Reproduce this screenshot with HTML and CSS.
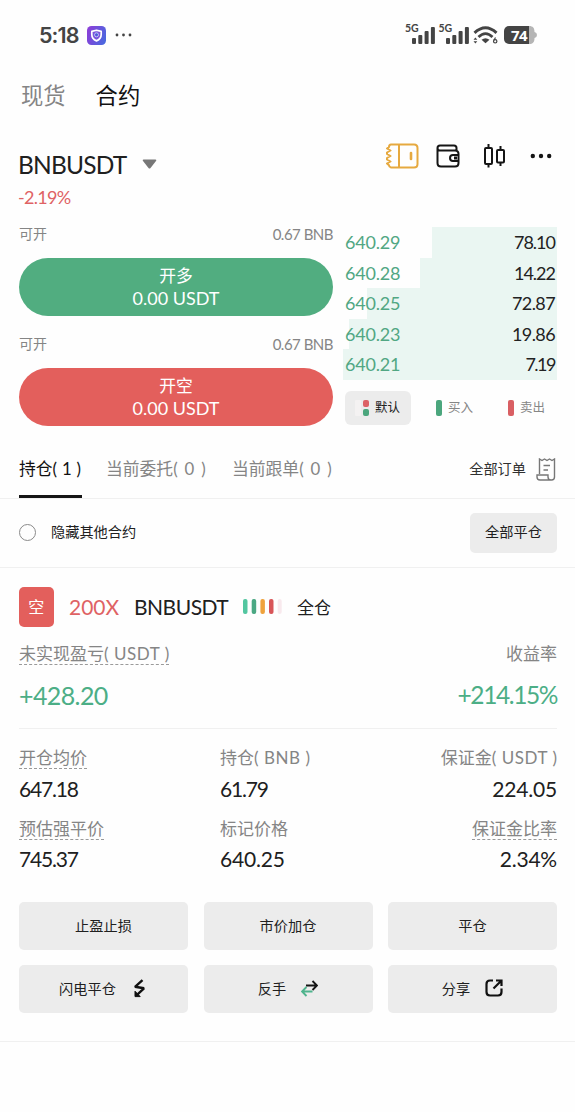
FILE: index.html
```html
<!DOCTYPE html>
<html lang="zh-CN">
<head>
<meta charset="utf-8">
<title>合约</title>
<link rel="stylesheet" href="styles.css">
</head>
<body>
<header class="status">
  <span class="time">5:18</span>
  <svg class="shield" width="19" height="19" viewBox="0 0 19 19"><defs><linearGradient id="g" x1="0" y1="0.3" x2="1" y2="0.7"><stop offset="0" stop-color="#8a3fd8"/><stop offset="1" stop-color="#4a68df"/></linearGradient></defs><rect width="19" height="19" rx="4.5" fill="url(#g)"/><path d="M9.5 4.2 14.2 5.4V8.5C14.2 11.500 12.300 13.700 9.500 14.900 6.700 13.700 4.800 11.500 4.800 8.500V5.400Z" fill="#7a55dc" stroke="#fff" stroke-width="1.7" stroke-linejoin="round"/><circle cx="9.500" cy="8.800" r="2" fill="#4c5cd8" stroke="#d9d2fa" stroke-width=".8"/></svg>
  <svg class="more-small" width="17" height="4" viewBox="0 0 17 4" fill="#444"><circle cx="2" cy="2" r="1.400"/><circle cx="8.500" cy="2" r="1.400"/><circle cx="15" cy="2" r="1.400"/></svg>
  <div class="signals">
    <div class="signal"><span class="net">5G</span><svg width="23" height="18" viewBox="0 0 23 18" fill="#444"><rect x="0" y="12" width="4" height="6" rx="1"/><rect x="6.300" y="9" width="4" height="9" rx="1"/><rect x="12.600" y="5" width="4" height="13" rx="1"/><rect x="18.900" y="1" width="4" height="17" rx="1"/></svg></div>
    <div class="signal"><span class="net">5G</span><svg width="23" height="18" viewBox="0 0 23 18" fill="#444"><rect x="0" y="12" width="4" height="6" rx="1"/><rect x="6.300" y="9" width="4" height="9" rx="1"/><rect x="12.600" y="5" width="4" height="13" rx="1"/><rect x="18.900" y="1" width="4" height="17" rx="1"/></svg></div>
    <svg class="wifi" width="26" height="19" viewBox="0 0 26 19" fill="none" stroke="#444"><path d="M1.500 6.800Q12.500-3.300 23.500 6.800" stroke-width="3"/><path d="M5.500 11Q12.500 4.300 19.500 11" stroke-width="2.800"/><path d="M8.500 13.800Q12.500 10.800 16.500 13.800L12.500 17.300Z" fill="#444" stroke="none"/><path d="M.500 13.800 2.400 11.500 4.300 13.800ZM.500 15.200 2.400 17.500 4.300 15.200Z" fill="#444" stroke="none"/><path d="M22.500 11.500 20.900 14.300" stroke-width="1.200"/><circle cx="22.200" cy="15.300" r="1.700" stroke-width="1.200"/></svg>
    <div class="battery"><span class="charge">74</span><svg width="8" height="18" viewBox="0 0 8 18" fill="#b5b5b5"><path d="M0 0C4 0 5.500 2 5.500 6Q8 6.500 8 9T5.500 12C5.500 16 4 18 0 18Z"/></svg></div>
  </div>
</header>

<nav class="modes"><span>现货</span><span class="current">合约</span></nav>

<section class="pair">
  <h1>BNBUSDT</h1>
  <svg class="caret" width="15" height="10" viewBox="0 0 15 10"><path d="M1.500.500H13.500Q15 .600 14 2L8.500 9Q7.500 10 6.500 9L1 2Q0 .600 1.500.500Z" fill="#777"/></svg>
  <div class="tools">
    <svg width="33" height="26" viewBox="0 0 33 26" fill="none" stroke="#e6a93f" stroke-width="2"><path d="M5 1.500H28Q31.500 1.500 31.500 5V21Q31.500 24.500 28 24.500H5Q3 24 3 22.200L1 20.500 4.500 18.500 1 16.500V15L4.500 13 1 11V9.500L4.500 7.500 1 5.500 3 4Q3 1.500 5 1.500Z" stroke-linejoin="round"/><path d="M13 2V24"/><path d="M25 10V16" stroke-width="2.600" stroke-linecap="round"/></svg>
    <svg width="24" height="24" viewBox="0 0 24 24" fill="none" stroke="#151515" stroke-width="2"><path d="M1.500 4V19Q1.500 22.500 5 22.500H19Q22.500 22.500 22.500 19V10Q22.500 6.500 19 6.500H4Q1.500 6.500 1.500 4 1.500 1.500 4 1.500H18Q20.500 1.500 20.500 4V6.500"/><path d="M22.500 11H17Q14 11 14 14T17 17H22.500"/><path d="M18 14H21" stroke-width="3"/></svg>
    <svg width="23" height="24" viewBox="0 0 23 24" fill="none" stroke="#151515" stroke-width="2"><path d="M5.500 0V4M5.500 20V23.500M17.500 2V6M17.500 18.500V22"/><rect x="2" y="4" width="7" height="16" rx="1"/><rect x="14" y="6" width="7" height="12.500" rx="1"/></svg>
    <svg width="22" height="6" viewBox="0 0 22 6" fill="#151515"><circle cx="2.800" cy="3" r="2.200"/><circle cx="11" cy="3" r="2.200"/><circle cx="19.200" cy="3" r="2.200"/></svg>
  </div>
</section>
<div class="change">-2.19%</div>

<section class="trade">
  <div class="orders">
    <div class="avail"><span class="zh">可开</span><span>0.67 BNB</span></div>
    <button class="open long"><span class="zh">开多</span><span>0.00 USDT</span></button>
    <div class="avail second"><span class="zh">可开</span><span>0.67 BNB</span></div>
    <button class="open short"><span class="zh">开空</span><span>0.00 USDT</span></button>
  </div>
  <div class="book">
    <div class="levels">
      <div class="level l1"><span>640.29</span><b>78.10</b></div>
      <div class="level l2"><span>640.28</span><b>14.22</b></div>
      <div class="level l3"><span>640.25</span><b>72.87</b></div>
      <div class="level l4"><span>640.23</span><b>19.86</b></div>
      <div class="level l5"><span>640.21</span><b class="narrow">7.19</b></div>
    </div>
    <div class="views">
      <div class="view active"><svg width="14" height="16" viewBox="0 0 14 16"><rect x="0" y="0" width="6" height="16" rx="1" fill="#f4f2f2"/><rect x="8" y="0" width="6" height="7" rx="2" fill="#dc6266"/><rect x="8" y="9" width="6" height="7" rx="2" fill="#4ba67d"/></svg>默认</div>
      <div class="view buy"><i></i>买入</div>
      <div class="view sell"><i></i>卖出</div>
    </div>
  </div>
</section>

<nav class="tabs">
  <span class="tab on">持仓<em>( 1 )</em></span><span class="tab">当前委托<em>( 0 )</em></span><span class="tab">当前跟单<em>( 0 )</em></span>
  <span class="history">全部订单<svg width="20" height="23" viewBox="0 0 20 23" fill="none" stroke="#777" stroke-width="1.400"><path d="M3.500 16V1L6 2.500 8.500 1 11 2.500 13.500 1 16 2.500 18.500 1V19Q18.500 22 15.500 22H4Q1 22 1 19V17H12V19Q12 22 15 22"/><path d="M7.500 7.500H14M7.500 12H12"/></svg></span>
</nav>

<section class="filter"><i class="radio"></i><span>隐藏其他合约</span><button class="closeall">全部平仓</button></section>

<main class="position">
  <div class="title">
    <span class="side">空</span><span class="lever">200X</span><span class="symbol">BNBUSDT</span>
    <svg class="risk" width="39" height="15" viewBox="0 0 39 15"><rect width="4.500" height="15" rx="2" fill="#53c6a0"/><rect x="8.700" width="4.500" height="15" rx="2" fill="#4ba883"/><rect x="17.400" width="4.500" height="15" rx="2" fill="#efa23c"/><rect x="26" width="4.500" height="15" rx="2" fill="#d85558"/><rect x="34.700" width="4" height="15" rx="2" fill="#f8e9ed"/></svg>
    <span class="margin-mode">全仓</span>
  </div>
  <div class="pnl">
    <div><span class="label tip">未实现盈亏<em>( USDT )</em></span><strong>+428.20</strong></div>
    <div class="end"><span class="label">收益率</span><strong class="rate">+214.15%</strong></div>
  </div>
  <div class="stats">
    <div><span class="label tip">开仓均价</span><strong class="narrow">647.18</strong></div>
    <div><span class="label">持仓<em>( BNB )</em></span><strong class="narrow">61.79</strong></div>
    <div class="end"><span class="label">保证金<em>( USDT )</em></span><strong>224.05</strong></div>
    <div><span class="label tip">预估强平价</span><strong class="narrow">745.37</strong></div>
    <div><span class="label">标记价格</span><strong>640.25</strong></div>
    <div class="end"><span class="label tip">保证金比率</span><strong>2.34%</strong></div>
  </div>
  <div class="actions">
    <button>止盈止损</button><button>市价加仓</button><button>平仓</button>
    <button>闪电平仓<svg width="17" height="19" viewBox="0 0 17 19" fill="none" stroke="#111" stroke-width="2.400"><path d="M11.500 1.200 4 7.800 13 9.300 6 15.800" stroke-linejoin="bevel"/><path d="M4 12.200V17.600H9.200Z" fill="#111" stroke-width="1"/></svg></button>
    <button>反手<svg width="17" height="17" viewBox="0 0 17 17" fill="none" stroke-width="1.900"><path d="M5 5.500H15.500M11.500 1 16 5.500 11.500 10" stroke="#151515"/><path d="M11.500 11.500H1.500M5.500 7 1 11.500 5.500 16" stroke="#4fb48d"/></svg></button>
    <button>分享<svg width="18" height="18" viewBox="0 0 18 18" fill="none" stroke="#111" stroke-width="2.200"><path d="M8 1.500H5Q1.500 1.500 1.500 5V13Q1.500 16.500 5 16.500H13Q16.500 16.500 16.500 13V9.500"/><path d="M8.500 9.500 16.500 1.500M11 1.500H16.500V7"/></svg></button>
  </div>
</main>
</body>
</html>
```

FILE: styles.css
```css
* { box-sizing: border-box; }
body {
  margin: 0;
  width: 575px;
  height: 1112px;
  overflow: hidden;
  background: #fefefe;
  color: #202020;
  font-family: Lato, "Noto Sans CJK SC", sans-serif;
}
h1, em, b, i, strong { font-weight: 400; font-style: normal; margin: 0; }
button { border: 0; padding: 0; font: inherit; color: inherit; }
svg { display: block; flex: none; }

.status { display: flex; align-items: center; height: 70px; padding: 0 38px 0 39px; color: #444; }
.time { width: 48px; font: 600 21.500px/30px Inter, sans-serif; letter-spacing: -.9px; }
.more-small { margin-left: 9px; }
.signals { display: flex; align-items: center; margin-left: auto; }
.signal { display: flex; width: 33.500px; }
.net { width: 7px; margin-top: -4px; font: 700 10.500px/12px Lato, sans-serif; white-space: nowrap; }
.wifi { margin-left: 1px; }
.battery { display: flex; margin-left: 5px; }
.charge { width: 25px; height: 18px; padding-left: 7px; border-radius: 5px 0 0 5px; background: #444; color: #fff; font: 700 15px/18px "Open Sans", sans-serif; letter-spacing: -.5px; }

.modes { display: flex; gap: 30px; height: 52px; padding-left: 21px; font-size: 22.300px; line-height: 52px; color: #858585; }
.current { color: #111; }

.pair { display: flex; align-items: center; height: 64px; padding: 0 23px 0 18px; }
h1 { width: 109px; padding-top: 22px; font-size: 24.500px; line-height: 42px; letter-spacing: -.8px; white-space: nowrap; }
.caret { margin: 20px 0 0 14.500px; }
.tools { display: flex; align-items: center; margin: 4px 0 0 auto; }
.tools svg:nth-child(2) { margin-left: 17px; }
.tools svg:nth-child(3) { margin-left: 23px; }
.tools svg:nth-child(4) { margin-left: 24px; }
.change { height: 36px; padding-left: 18px; font-size: 18px; line-height: 22px; letter-spacing: -.7px; color: #df6264; }

.trade { display: flex; height: 212px; padding: 0 18px 0 19px; }
.orders { width: 314px; }
.avail { display: flex; justify-content: space-between; height: 36px; font-size: 15px; line-height: 24px; letter-spacing: -.5px; color: #858585; }
.avail .zh { font-size: 14px; letter-spacing: 0; }
.avail.second { height: 52.500px; padding-top: 16px; }
.open { display: flex; flex-direction: column; align-items: center; width: 314px; height: 57.500px; padding-top: 5.500px; border-radius: 29px; color: #fff; font-size: 18px; line-height: 23px; }
.open .zh { font-size: 16.800px; }
.long { background: #51ad80; }
.short { background: #e35f5c; }
.book { width: 214px; margin-left: 10px; padding-top: 5px; }
.level { display: flex; justify-content: space-between; height: 30.600px; padding: 0 2px; font-size: 18px; line-height: 31px; letter-spacing: -.2px; color: #51a783; }
.level b { color: #222; letter-spacing: -1px; }
.l1 { background: linear-gradient(90deg, transparent 89px, #eaf6f2 89px); }
.l2 { background: linear-gradient(90deg, transparent 77px, #eaf6f2 77px); }
.l3 { background: linear-gradient(90deg, transparent 24px, #eaf6f2 24px); }
.l3 b, .l4 b { letter-spacing: -.6px; }
.l4 { background: linear-gradient(90deg, transparent 6px, #eaf6f2 6px); }
.l5 { background: #eaf6f2; }
.l5 .narrow { letter-spacing: -1.500px; }
.views { display: flex; margin: 11px 0 0 2px; font-size: 12.500px; line-height: 34px; color: #868686; }
.view { display: flex; align-items: center; }
.active { width: 66px; height: 34px; padding-left: 10px; gap: 6px; border-radius: 6px; background: #ececec; color: #202020; }
.view i { width: 6px; height: 16px; border-radius: 2px; margin-right: 6px; }
.buy { margin-left: 25px; }
.buy i { background: #4ba67d; }
.sell { margin-left: 35px; }
.sell i { background: #d95f63; }

.tabs { display: flex; height: 64.500px; padding: 0 19px; border-bottom: 1px solid #f0f0f0; font-size: 16.800px; line-height: 70px; color: #858585; }
.tab { width: 101px; margin-right: 25px; white-space: nowrap; }
.tab em { letter-spacing: 1.300px; }
.tab.on { width: 63px; height: 64px; border-bottom: 3px solid #161616; color: #111; margin-right: 24px; }
.tab.on em { letter-spacing: .3px; }
.history { display: flex; align-items: center; gap: 10px; height: 70px; margin-left: auto; font-size: 14.200px; color: #303030; white-space: nowrap; }

.filter { display: flex; align-items: center; height: 69px; padding: 0 18px 0 19px; border-bottom: 1px solid #f0f0f0; font-size: 14.200px; line-height: 20px; }
.filter span { margin-top: -1px; }
.radio { width: 17px; height: 17px; margin-right: 15px; border: 1.500px solid #8a8a8a; border-radius: 50%; }
.closeall { width: 87px; height: 40px; padding-bottom: 1px; margin-left: auto; border-radius: 5px; background: #ececec; }

.position { height: 474px; padding: 19px 18px 0 19px; border-bottom: 1px solid #f0f0f0; }
.title { display: flex; align-items: center; height: 40px; font-size: 21px; white-space: nowrap; }
.side { width: 34.500px; height: 40px; border-radius: 5px; background: #e35f5c; color: #fff; font-size: 16px; line-height: 40px; text-align: center; }
.lever { width: 65px; margin-left: 15.500px; color: #df6264; }
.symbol { width: 109px; letter-spacing: -.5px; }
.margin-mode { margin-left: 15px; font-size: 17px; }
.pnl { display: flex; justify-content: space-between; height: 102px; padding-top: 15px; border-bottom: 1px solid #f0f0f0; }
.pnl > div, .stats > div { display: flex; flex-direction: column; align-items: flex-start; }
.label { height: 23px; font-size: 17px; line-height: 24px; color: #858585; white-space: nowrap; }
.label em { letter-spacing: .55px; margin-right: -.5px; }
.tip { border-bottom: 1px dashed #9a9a9a; }
strong { font-size: 21px; line-height: 30px; margin-top: 4.500px; letter-spacing: -.2px; }
.pnl strong { margin-top: 11px; font-size: 25px; line-height: 38px; letter-spacing: -.6px; color: #4cae86; }
.pnl .rate { font-size: 24.500px; letter-spacing: -1.400px; }
.pnl .end, .stats .end { align-items: flex-end; }
.stats { display: grid; grid-template-columns: 201px 160px 177px; grid-auto-rows: 70.500px; height: 173px; padding-top: 17.500px; }
.stats .narrow { letter-spacing: -1.200px; }
.actions { display: grid; grid-template-columns: repeat(3, 169px); gap: 15px 15.500px; }
.actions button { display: flex; align-items: center; justify-content: center; gap: 15px; height: 48px; padding-bottom: 1px; border-radius: 5px; background: #ececec; font-size: 14.200px; }
```
